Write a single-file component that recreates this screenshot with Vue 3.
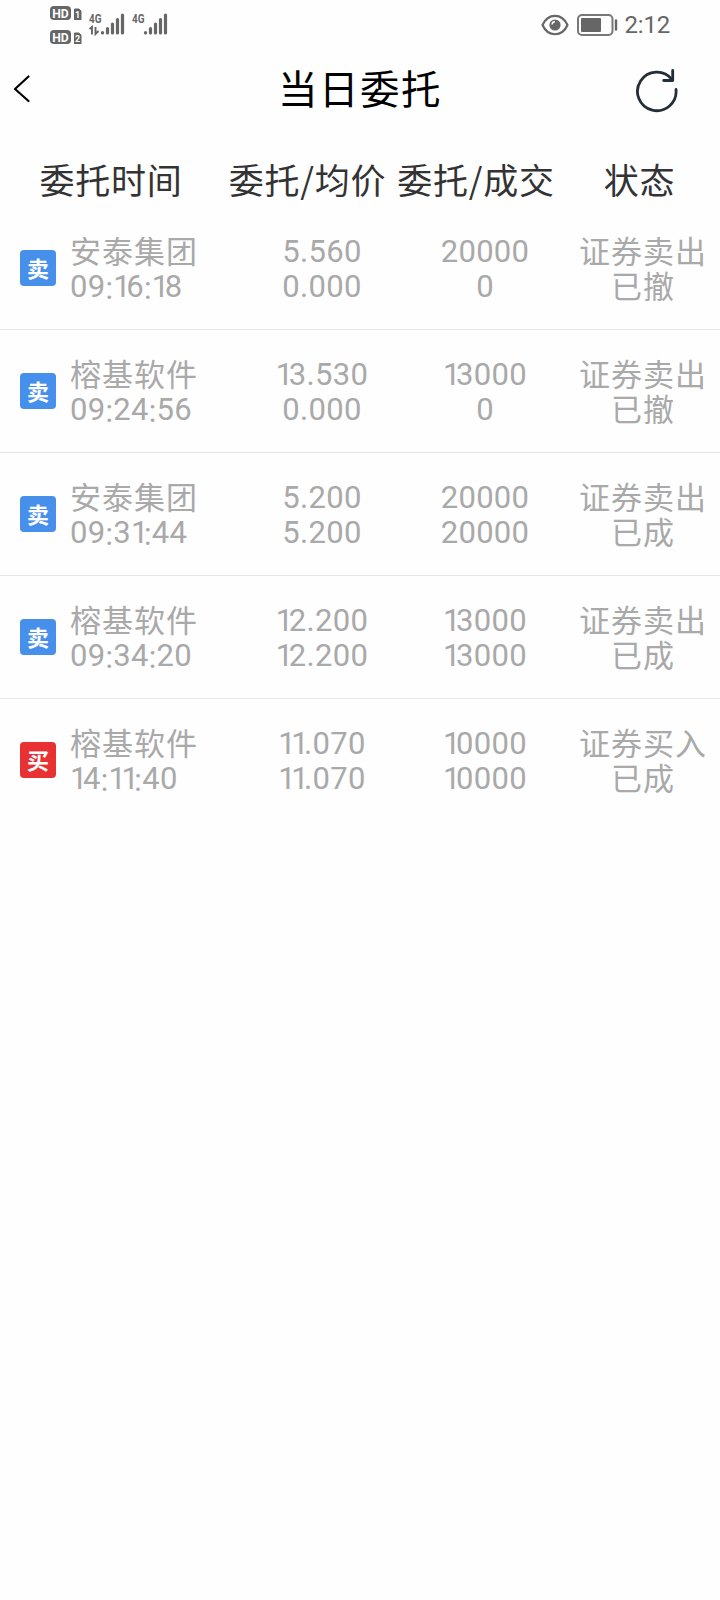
<template>
  <div class="page">
    <div class="status-bar">
      <div class="status-left">
        <div class="hd-list">
          <svg v-for="n in 2" :key="n" class="hd" width="32" height="14" viewBox="0 0 32 14">
            <rect x="0" y="0" width="21" height="14" rx="4" fill="#666" />
            <text x="10.500" y="11.600" text-anchor="middle" font-size="13" font-weight="700" textLength="16.500" lengthAdjust="spacingAndGlyphs" fill="#fff">HD</text>
            <path d="M24.500 3h4.500l2 2v9h-6.500z" fill="#666" stroke="#666" stroke-linejoin="round" />
            <text x="27.700" y="11.800" text-anchor="middle" font-size="9" font-weight="700" fill="#fff">{{ n }}</text>
          </svg>
        </div>
        <svg class="signal" width="37" height="24" viewBox="0 0 37 24">
          <text x="0" y="9.500" class="net" textLength="12.500" lengthAdjust="spacingAndGlyphs">4G</text>
          <path d="M0.500 16l2.500-2v7.500M6.500 14v7l3-3" fill="none" stroke="#666" stroke-width="1.900" />
          <g stroke="#666" stroke-width="3.200" stroke-linecap="round">
            <path d="M13.500 19.500v.500M18.500 15.500v4.500M23.500 11v9M28.500 6.500v13.500M33.500 2v18" />
          </g>
        </svg>
        <svg class="signal second" width="37" height="24" viewBox="0 0 37 24">
          <text x="0" y="9.500" class="net" textLength="12.500" lengthAdjust="spacingAndGlyphs">4G</text>
          <g stroke="#666" stroke-width="3.200" stroke-linecap="round">
            <path d="M13.500 19.500v.500M18.500 15.500v4.500M23.500 11v9M28.500 6.500v13.500M33.500 2v18" />
          </g>
        </svg>
      </div>
      <div class="status-right">
        <svg width="28" height="22" viewBox="0 0 28 22">
          <path d="M1.500 11C7-1.300 21-1.300 26.500 11C21 23.300 7 23.300 1.500 11z" fill="none" stroke="#666" stroke-width="2.200" stroke-linejoin="round" />
          <circle cx="14" cy="11" r="5.600" fill="#666" />
          <path d="M11 10.500a3 3 0 0 1 3-2.700" fill="none" stroke="#fff" stroke-width="1.500" />
        </svg>
        <svg class="battery" width="42" height="22" viewBox="0 0 42 22">
          <rect x="1" y="1" width="34.500" height="20" rx="4" fill="none" stroke="#777" stroke-width="2" />
          <rect x="4" y="4" width="20" height="14" rx="1" fill="#666" />
          <path d="M39 6.500v9" stroke="#666" stroke-width="2.400" stroke-linecap="round" />
        </svg>
        <span class="clock">2:12</span>
      </div>
    </div>

    <header class="nav">
      <button class="nav-btn back" aria-label="返回">
        <svg width="18" height="28" viewBox="0 0 18 28">
          <path d="M15.500 1.500L2 14l13.500 12" fill="none" stroke="#000" stroke-width="2.200" stroke-linecap="round" stroke-linejoin="round" />
        </svg>
      </button>
      <h1>当日委托</h1>
      <button class="nav-btn refresh" aria-label="刷新">
        <svg width="44" height="44" viewBox="0 0 44 44">
          <g fill="none" stroke="#252d38" stroke-width="2.800" stroke-linecap="round" stroke-linejoin="round">
            <path d="M41 20.500A19.300 19.300 0 1 1 37 10.500" />
            <path d="M37.700 1.500v10h-9" />
          </g>
        </svg>
      </button>
    </header>

    <div class="table-head">
      <span v-for="title in columns" :key="title">{{ title }}</span>
    </div>

    <ul class="orders">
      <li v-for="order in orders" :key="order.time" class="order">
        <div class="cell main">
          <span class="badge" :class="order.side">{{ order.side === 'sell' ? '卖' : '买' }}</span>
          <div>
            <div class="line">{{ order.name }}</div>
            <div class="line num time"><span v-for="(part, i) in split(order.time)" :key="i" :class="glyphClass(part)">{{ part }}</span></div>
          </div>
        </div>
        <div class="cell">
          <div v-for="(value, k) in order.price" :key="k" class="line num"><span v-for="(part, i) in split(value)" :key="i" :class="glyphClass(part)">{{ part }}</span></div>
        </div>
        <div class="cell">
          <div v-for="(value, k) in order.amount" :key="k" class="line num"><span v-for="(part, i) in split(value)" :key="i" :class="glyphClass(part)">{{ part }}</span></div>
        </div>
        <div class="cell">
          <div class="line">{{ order.side === 'sell' ? '证券卖出' : '证券买入' }}</div>
          <div class="line">{{ order.state }}</div>
        </div>
      </li>
    </ul>
  </div>
</template>

<script setup>
import { ref } from 'vue';

const columns = ['委托时间', '委托/均价', '委托/成交', '状态'];

const orders = ref([
  { side: 'sell', name: '安泰集团', time: '09:16:18', price: ['5.560', '0.000'], amount: ['20000', '0'], state: '已撤' },
  { side: 'sell', name: '榕基软件', time: '09:24:56', price: ['13.530', '0.000'], amount: ['13000', '0'], state: '已撤' },
  { side: 'sell', name: '安泰集团', time: '09:31:44', price: ['5.200', '5.200'], amount: ['20000', '20000'], state: '已成' },
  { side: 'sell', name: '榕基软件', time: '09:34:20', price: ['12.200', '12.200'], amount: ['13000', '13000'], state: '已成' },
  { side: 'buy', name: '榕基软件', time: '14:11:40', price: ['11.070', '11.070'], amount: ['10000', '10000'], state: '已成' },
]);

// "1" and the colon are spaced differently from the other digits
const split = (text) => text.split(/([1:])/).filter(Boolean);

const glyphClass = (part) => {
  if (part === '1') return 'one';
  if (part === ':') return 'colon';
  return '';
};
</script>

<style>
body {
  margin: 0;
  background: #fefefe;
}
</style>

<style scoped>
.page {
  width: 720px;
  min-height: 1600px;
  background: #fefefe;
  font-family: "Noto Sans CJK SC", sans-serif;
}

.status-bar {
  display: flex;
  justify-content: space-between;
  box-sizing: border-box;
  height: 50px;
  padding: 6px 50px 0;
  font-family: Roboto, sans-serif;
}

.status-left {
  display: flex;
  align-items: flex-start;
}

.hd-list {
  display: flex;
  flex-direction: column;
  gap: 10px;
}

.hd {
  display: block;
}

.signal {
  margin: 7px 0 0 7px;
  overflow: visible;
}

.signal.second {
  margin-left: 6px;
}

.net {
  font-size: 13.5px;
  font-weight: 700;
  fill: #666;
}

.status-right {
  display: flex;
  align-items: center;
  height: 37px;
  color: #666;
}

.battery {
  margin-left: 8px;
}

.clock {
  margin-left: 6px;
  font-size: 24px;
  letter-spacing: -0.2px;
}

.nav {
  display: grid;
  grid-template-columns: 100px 1fr 100px;
  align-items: center;
  height: 82px;
}

.nav h1 {
  margin: 0;
  padding-bottom: 8px;
  color: #000;
  font-size: 39.5px;
  font-weight: 400;
  line-height: 56px;
  letter-spacing: 1.5px;
  text-align: center;
}

.nav-btn {
  display: flex;
  padding: 0;
  border: none;
  background: none;
}

.back {
  padding: 0 0 4px 13px;
}

.refresh {
  padding-left: 15px;
}

.table-head {
  display: grid;
  grid-template-columns: 222px 171px 166px 161px;
  height: 75px;
  color: #333;
  font-size: 35px;
  line-height: 93px;
  letter-spacing: 0.8px;
  text-align: center;
  white-space: nowrap;
}

.orders {
  margin: 0;
  padding: 0;
  list-style: none;
}

.order {
  display: grid;
  grid-template-columns: 240px 164px 162px 154px;
  align-items: center;
  box-sizing: border-box;
  height: 123px;
  border-bottom: 1px solid #e6e6e6;
  color: #a9a9a9;
}

.order:last-child {
  border-color: transparent;
}

.cell {
  text-align: center;
}

.main {
  display: flex;
  align-items: center;
  gap: 14px;
  padding-left: 20px;
  text-align: left;
}

.line {
  height: 35px;
  font-size: 31px;
  line-height: 33px;
  letter-spacing: 1px;
  white-space: nowrap;
}

.num {
  font-family: Roboto, sans-serif;
  line-height: 37px;
  letter-spacing: 0.3px;
}

.time {
  letter-spacing: 0.3px;
}

.one {
  letter-spacing: -4.5px;
}

.colon {
  position: relative;
  top: 2px;
}

.badge {
  width: 36px;
  height: 36px;
  border-radius: 4px;
  color: #fff;
  font-size: 22px;
  font-weight: 700;
  line-height: 34px;
  text-align: center;
}

.sell {
  background: #468fea;
}

.buy {
  background: #e73132;
}
</style>
